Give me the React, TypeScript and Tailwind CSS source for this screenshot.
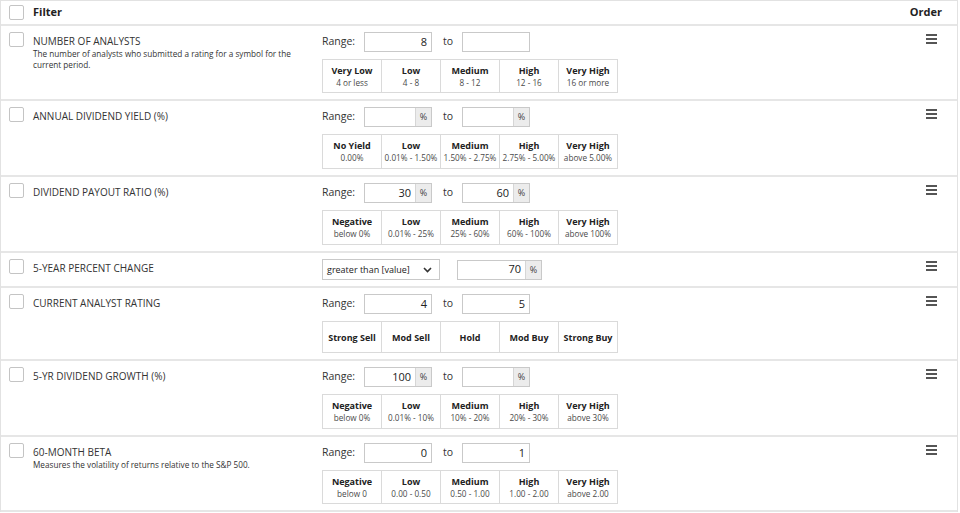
const font = { fontFamily: '"Open Sans", "Noto Sans", sans-serif' };

type Band = { label: string; sub?: string };

type Row = {
  title: string;
  desc?: string;
  kind: "range" | "select";
  from?: string;
  to?: string;
  pct?: boolean;
  bands?: Band[];
  value?: string;
  tall?: boolean;
};

const rows: Row[] = [
  {
    title: "NUMBER OF ANALYSTS",
    desc: "The number of analysts who submitted a rating for a symbol for the current period.",
    kind: "range",
    from: "8",
    to: "",
    bands: [
      { label: "Very Low", sub: "4 or less" },
      { label: "Low", sub: "4 - 8" },
      { label: "Medium", sub: "8 - 12" },
      { label: "High", sub: "12 - 16" },
      { label: "Very High", sub: "16 or more" },
    ],
  },
  {
    title: "ANNUAL DIVIDEND YIELD (%)",
    kind: "range",
    pct: true,
    tall: true,
    from: "",
    to: "",
    bands: [
      { label: "No Yield", sub: "0.00%" },
      { label: "Low", sub: "0.01% - 1.50%" },
      { label: "Medium", sub: "1.50% - 2.75%" },
      { label: "High", sub: "2.75% - 5.00%" },
      { label: "Very High", sub: "above 5.00%" },
    ],
  },
  {
    title: "DIVIDEND PAYOUT RATIO (%)",
    kind: "range",
    pct: true,
    tall: true,
    from: "30",
    to: "60",
    bands: [
      { label: "Negative", sub: "below 0%" },
      { label: "Low", sub: "0.01% - 25%" },
      { label: "Medium", sub: "25% - 60%" },
      { label: "High", sub: "60% - 100%" },
      { label: "Very High", sub: "above 100%" },
    ],
  },
  { title: "5-YEAR PERCENT CHANGE", kind: "select", value: "70" },
  {
    title: "CURRENT ANALYST RATING",
    kind: "range",
    from: "4",
    to: "5",
    bands: [
      { label: "Strong Sell" },
      { label: "Mod Sell" },
      { label: "Hold" },
      { label: "Mod Buy" },
      { label: "Strong Buy" },
    ],
  },
  {
    title: "5-YR DIVIDEND GROWTH (%)",
    kind: "range",
    pct: true,
    tall: true,
    from: "100",
    to: "",
    bands: [
      { label: "Negative", sub: "below 0%" },
      { label: "Low", sub: "0.01% - 10%" },
      { label: "Medium", sub: "10% - 20%" },
      { label: "High", sub: "20% - 30%" },
      { label: "Very High", sub: "above 30%" },
    ],
  },
  {
    title: "60-MONTH BETA",
    desc: "Measures the volatility of returns relative to the S&P 500.",
    kind: "range",
    from: "0",
    to: "1",
    bands: [
      { label: "Negative", sub: "below 0" },
      { label: "Low", sub: "0.00 - 0.50" },
      { label: "Medium", sub: "0.50 - 1.00" },
      { label: "High", sub: "1.00 - 2.00" },
      { label: "Very High", sub: "above 2.00" },
    ],
  },
];

function Checkbox() {
  return <div className="h-[15px] w-[15px] rounded-[2px] border border-[#c4c4c4] bg-white" />;
}

function Burger() {
  return (
    <div className="flex w-[11px] flex-col gap-[2px]">
      <span className="h-[2px] bg-[#555]" />
      <span className="h-[2px] bg-[#555]" />
      <span className="h-[2px] bg-[#555]" />
    </div>
  );
}

function NumInput({ value, pct, w = 68 }: { value: string; pct?: boolean; w?: number }) {
  return (
    <div className="flex h-[20px] border border-[#c9c9c9] bg-white" style={{ width: w }}>
      <div className="flex flex-1 items-center justify-end pr-[4px] text-[11px] text-[#222]">{value}</div>
      {pct && (
        <div className="flex w-[16px] items-center justify-center border-l border-[#d6d6d6] bg-[#ececec] text-[9px] text-[#444]">
          %
        </div>
      )}
    </div>
  );
}

function Bands({ bands, tall }: { bands: Band[]; tall?: boolean }) {
  const hasSub = bands.some((b) => b.sub);
  const h = !hasSub ? "h-[30px]" : tall ? "h-[33px]" : "h-[32px]";
  return (
    <div className="mt-[7px] flex w-[296px] border border-[#dadada]">
      {bands.map((b, i) => (
        <div
          key={i}
          className={`flex ${h} flex-1 flex-col items-center justify-center ${i > 0 ? "border-l border-[#dadada]" : ""}`}
        >
          <span className="text-[9px] font-bold leading-[13px] text-[#222]">{b.label}</span>
          {b.sub && <span className="text-[8.2px] leading-[12px] text-[#4a4a4a]">{b.sub}</span>}
        </div>
      ))}
    </div>
  );
}

export default function App() {
  return (
    <div className="h-[513px] w-[960px] bg-white" style={font}>
      <div className="w-[958px] border-x border-t border-[#e2e2e2]">
        {/* Header */}
        <div className="flex h-[25px] items-center border-b-2 border-[#e6e6e6]">
          <div className="w-[32px] pl-[8px]">
            <Checkbox />
          </div>
          <div className="flex-1 text-[11px] font-bold text-[#222]">Filter</div>
          <div className="w-[58px] pr-[15px] text-right text-[11px] font-bold text-[#222]">Order</div>
        </div>

        {rows.map((r, i) => (
          <div key={i} className="flex border-b-2 border-[#e6e6e6]">
            <div className="w-[32px] pl-[8px] pt-[6px]">
              <Checkbox />
            </div>
            <div className="w-[289px] pt-[8px] pr-[10px]">
              <div className="text-[10px] leading-[14px] text-[#333]">{r.title}</div>
              {r.desc && <div className="text-[8.2px] leading-[11px] text-[#333]">{r.desc}</div>}
            </div>
            <div className="flex-1 pt-[6px] pb-[6px]">
              {r.kind === "range" ? (
                <>
                  <div className="flex items-center">
                    <span className="w-[42px] text-[10.5px] text-[#333]">Range:</span>
                    <NumInput value={r.from ?? ""} pct={r.pct} />
                    <span className="w-[30px] pl-[11px] text-[10.5px] text-[#333]">to</span>
                    <NumInput value={r.to ?? ""} pct={r.pct} />
                  </div>
                  {r.bands && <Bands bands={r.bands} tall={r.tall} />}
                </>
              ) : (
                <div className="flex items-center">
                  <div className="flex h-[21px] w-[118px] items-center justify-between border border-[#c9c9c9] bg-white px-[4px] text-[9px] text-[#222]">
                    <span>greater than [value]</span>
                    <svg width="9" height="6" viewBox="0 0 9 6" className="mr-[3px]">
                      <path d="M1 1l3.5 3.5L8 1" stroke="#333" strokeWidth="1.6" fill="none" />
                    </svg>
                  </div>
                  <div className="ml-[17px]">
                    <NumInput value={r.value ?? ""} pct w={85} />
                  </div>
                </div>
              )}
            </div>
            <div className="flex w-[57px] justify-start pl-[26px] pt-[8px]">
              <Burger />
            </div>
          </div>
        ))}
      </div>
    </div>
  );
}
